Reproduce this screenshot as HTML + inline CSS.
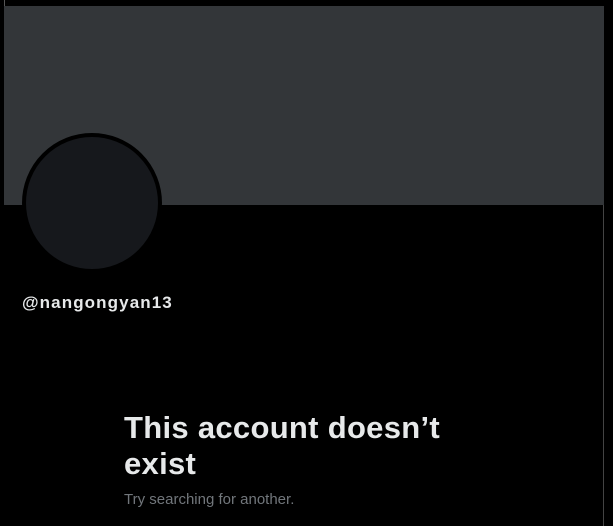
<!DOCTYPE html>
<html><head><meta charset="utf-8"><style>
html,body{margin:0;padding:0;background:#000;width:613px;height:526px;overflow:hidden;font-family:"Liberation Sans",sans-serif;}
.banner{position:absolute;left:4px;top:6px;width:600px;height:199px;background:#333639;}
.l1{position:absolute;left:4px;top:0;width:1px;height:6px;background:#555;}
.l2{position:absolute;left:603px;top:205px;width:1px;height:321px;background:#444;}
.av{position:absolute;left:22px;top:133px;width:132px;height:132px;border:4px solid #000;border-radius:50%;background:#16181c;}
.user{position:absolute;left:22px;top:293px;color:#e7e9ea;font-weight:bold;font-size:17px;letter-spacing:1.1px;}
.h{position:absolute;left:124px;top:410px;color:#e7e9ea;font-weight:bold;font-size:31px;line-height:36px;letter-spacing:0.3px;width:340px;}
.s{position:absolute;left:124px;top:491px;color:#71767b;font-size:15px;}
</style></head><body>
<div class="banner"></div><div class="l1"></div><div class="l2"></div>
<div class="av"></div>
<div class="user">@nangongyan13</div>
<div class="h">This account doesn’t<br>exist</div>
<div class="s">Try searching for another.</div>
</body></html>
